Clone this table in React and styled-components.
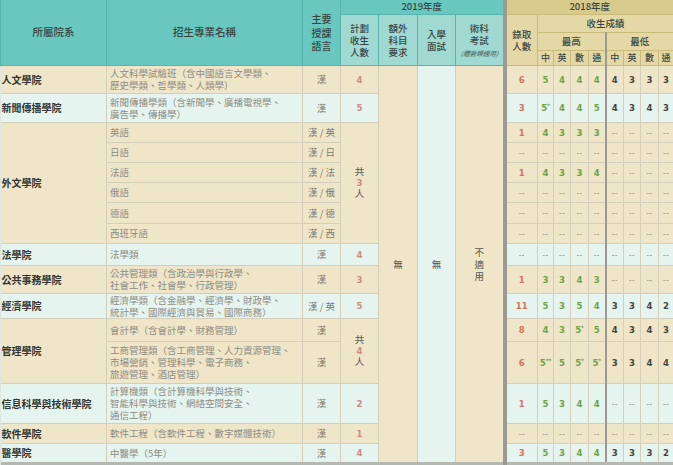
import React from "react";
import styled, { createGlobalStyle } from "styled-components";

const Global = createGlobalStyle`
  html, body { margin: 0; padding: 0; background: #dfe5df; }
  body { font-family: "Noto Sans CJK TC", "Noto Sans", sans-serif; }
`;

const BEIGE = "#efe5c8";
const MINT = "#e6f4ef";
const LINE = "#d3cfbb";
const TEAL = "#68c7bf";
const TEAL_LIGHT = "#9fd9d1";
const TEAL_LINE = "#58b5ad";
const KHAKI = "#d8ca8b";
const KHAKI_LIGHT = "#e4d9a6";
const KHAKI_LINE = "#c9bb7c";
const DIVIDER = "#9b9b93";

const Table = styled.table`
  width: 673px;
  table-layout: fixed;
  border-collapse: collapse;
  border-bottom: 3px solid #b5b8b0;
`;

const HeadRow = styled.tr`
  height: ${(p) => p.$h}px;
`;

const HeadCell = styled.th`
  padding: 0;
  background: ${(p) => p.$bg};
  border: 1px solid ${(p) => p.$line};
  border-left: ${(p) => (p.$div ? `${p.$div}px solid ${DIVIDER}` : `1px solid ${p.$line}`)};
  border-top: none;
  color: #3a4644;
  font-size: ${(p) => p.$size || 9.5}px;
  font-weight: 500;
  line-height: ${(p) => p.$lh || 12}px;
  text-align: center;
  vertical-align: middle;
  white-space: nowrap;
`;

const Note = styled.span`
  display: inline-block;
  font-size: 6.5px;
  font-style: italic;
  line-height: 8px;
  color: #56706c;
  transform: skewX(-8deg);
`;

const BodyRow = styled.tr`
  height: ${(p) => p.$h}px;
`;

const Cell = styled.td`
  padding: 0;
  background: ${(p) => (p.$mint ? MINT : BEIGE)};
  border: 1px solid ${LINE};
  vertical-align: middle;
  white-space: nowrap;
  overflow: hidden;
`;

const DeptCell = styled(Cell)`
  border-left: none;
  padding-left: 1px;
  font-size: 10px;
  font-weight: 700;
  color: #33352f;
`;

const ProgCell = styled(Cell)`
  padding-left: 3px;
  font-size: 9.5px;
  line-height: 12px;
  color: #8e8d84;
`;

const LangCell = styled(Cell)`
  text-align: center;
  font-size: 9.5px;
  color: #7c7b72;
`;

const PlanCell = styled(Cell)`
  text-align: center;
  font-family: "DejaVu Sans Condensed", "Liberation Sans Narrow", sans-serif;
  font-size: 9.5px;
  font-weight: 600;
  color: #cf8a80;
  line-height: 11px;
`;

const Gong = styled.span`
  font-family: "Noto Sans CJK TC", sans-serif;
  font-weight: 400;
  font-size: 9.5px;
  color: #55564f;
`;

const NoteCell = styled(Cell)`
  border-top: none;
  text-align: center;
  font-size: 9.5px;
  line-height: 12px;
  color: #55564f;
`;

const NumCell = styled(Cell)`
  text-align: center;
  font-family: "DejaVu Sans Condensed", "Liberation Sans Narrow", sans-serif;
  font-size: 9.5px;
  font-weight: 600;
  color: ${(p) => p.$color};
  border-left: ${(p) => (p.$div ? `${p.$div}px solid ${DIVIDER}` : `1px solid ${LINE}`)};
`;

const Sup = styled.span`
  font-size: 6px;
  vertical-align: 3px;
`;

const Dash = styled.span`
  color: #8e8d84;
  font-weight: 400;
  font-size: 8px;
  letter-spacing: 0.5px;
`;

const rows = [
  { h: 28, dept: "人文學院", span: 1, prog: ["人文科學試驗班（含中國語言文學類、", "歷史學類、哲學類、人類學）"], lang: "漢", plan: "4", mint: false, adm: "6", hi: ["5", "4", "4", "4"], lo: ["4", "3", "3", "3"] },
  { h: 29, dept: "新聞傳播學院", span: 1, prog: ["新聞傳播學類（含新聞學、廣播電視學、", "廣告學、傳播學）"], lang: "漢", plan: "5", mint: true, adm: "3", hi: ["5*", "4", "4", "5"], lo: ["4", "3", "4", "3"] },
  { h: 20, dept: "外文學院", span: 6, prog: ["英語"], lang: "漢 / 英", plan: "共3", planSpan: 6, mint: false, adm: "1", hi: ["4", "3", "3", "3"], lo: null },
  { h: 20, prog: ["日語"], lang: "漢 / 日", mint: false, adm: null },
  { h: 20, prog: ["法語"], lang: "漢 / 法", mint: false, adm: "1", hi: ["4", "3", "3", "4"], lo: null },
  { h: 20, prog: ["俄語"], lang: "漢 / 俄", mint: false, adm: null },
  { h: 21, prog: ["德語"], lang: "漢 / 德", mint: false, adm: null },
  { h: 20, prog: ["西班牙語"], lang: "漢 / 西", mint: false, adm: null },
  { h: 22, dept: "法學院", span: 1, prog: ["法學類"], lang: "漢", plan: "4", mint: true, adm: null },
  { h: 28, dept: "公共事務學院", span: 1, prog: ["公共管理類（含政治學與行政學、", "社會工作、社會學、行政管理）"], lang: "漢", plan: "3", mint: false, adm: "1", hi: ["3", "3", "4", "3"], lo: null },
  { h: 25, dept: "經濟學院", span: 1, prog: ["經濟學類（含金融學、經濟學、財政學、", "統計學、國際經濟與貿易、國際商務）"], lang: "漢 / 英", plan: "5", mint: true, adm: "11", hi: ["5", "3", "5", "4"], lo: ["3", "3", "4", "2"] },
  { h: 23, dept: "管理學院", span: 2, prog: ["會計學（含會計學、財務管理）"], lang: "漢", plan: "共4", planSpan: 2, mint: false, adm: "8", hi: ["4", "3", "5*", "5"], lo: ["4", "3", "4", "3"] },
  { h: 42, prog: ["工商管理類（含工商管理、人力資源管理、", "市場營銷、管理科學、電子商務、", "旅遊管理、酒店管理）"], lang: "漢", mint: false, adm: "6", hi: ["5**", "5", "5*", "5*"], lo: ["3", "3", "4", "4"] },
  { h: 40, dept: "信息科學與技術學院", span: 1, prog: ["計算機類（含計算機科學與技術、", "智能科學與技術、網絡空間安全、", "通信工程）"], lang: "漢", plan: "2", mint: true, adm: "1", hi: ["5", "3", "4", "4"], lo: null },
  { h: 20, dept: "軟件學院", span: 1, prog: ["軟件工程（含軟件工程、數字媒體技術）"], lang: "漢", plan: "1", mint: false, adm: null },
  { h: 20, dept: "醫學院", span: 1, prog: ["中醫學（5年）"], lang: "漢", plan: "4", mint: true, adm: "3", hi: ["5", "3", "4", "4"], lo: ["3", "3", "3", "2"] },
];

const Score = ({ v }) => {
  if (v == null) return <Dash>--</Dash>;
  const m = v.match(/^(\d+)(\**)$/);
  return (
    <>
      {m[1]}
      {m[2] && <Sup>{m[2]}</Sup>}
    </>
  );
};

const Stack = ({ lines }) => (
  <>
    {lines.map((l, i) => (
      <React.Fragment key={i}>
        {i > 0 && <br />}
        {l}
      </React.Fragment>
    ))}
  </>
);

const widths = [106, 196, 38, 38, 39, 38, 49, 33, 16, 17, 18, 17, 18, 17, 18, 15];

export default function App() {
  const total = rows.length;
  return (
    <>
      <Global />
      <Table>
        <colgroup>
          {widths.map((w, i) => (
            <col key={i} style={{ width: w }} />
          ))}
        </colgroup>
        <thead>
          <HeadRow $h={14}>
            <HeadCell rowSpan={4} $bg={TEAL} $line={TEAL_LINE} $size={10.5}>所屬院系</HeadCell>
            <HeadCell rowSpan={4} $bg={TEAL} $line={TEAL_LINE} $size={10.5}>招生專業名稱</HeadCell>
            <HeadCell rowSpan={4} $bg={TEAL} $line={TEAL_LINE} $size={10} $lh={13.5}>
              <Stack lines={["主要", "授課", "語言"]} />
            </HeadCell>
            <HeadCell colSpan={4} $bg={TEAL} $line={TEAL_LINE} $size={9.5} $lh={13}>2019年度</HeadCell>
            <HeadCell colSpan={9} $bg={KHAKI} $line={KHAKI_LINE} $div={4} $size={9.5} $lh={13}>2018年度</HeadCell>
          </HeadRow>
          <HeadRow $h={18}>
            <HeadCell rowSpan={3} $bg={TEAL_LIGHT} $line={TEAL_LINE}>
              <Stack lines={["計劃", "收生", "人數"]} />
            </HeadCell>
            <HeadCell rowSpan={3} $bg={TEAL_LIGHT} $line={TEAL_LINE}>
              <Stack lines={["額外", "科目", "要求"]} />
            </HeadCell>
            <HeadCell rowSpan={3} $bg={TEAL_LIGHT} $line={TEAL_LINE}>
              <Stack lines={["入學", "面試"]} />
            </HeadCell>
            <HeadCell rowSpan={3} $bg={TEAL_LIGHT} $line={TEAL_LINE}>
              術科
              <br />
              考試
              <br />
              <Note>(體藝類適用)</Note>
            </HeadCell>
            <HeadCell rowSpan={3} $bg={KHAKI_LIGHT} $line={KHAKI_LINE} $div={4}>
              <Stack lines={["錄取", "人數"]} />
            </HeadCell>
            <HeadCell colSpan={8} $bg={KHAKI_LIGHT} $line={KHAKI_LINE}>收生成績</HeadCell>
          </HeadRow>
          <HeadRow $h={18}>
            <HeadCell colSpan={4} $bg={KHAKI_LIGHT} $line={KHAKI_LINE}>最高</HeadCell>
            <HeadCell colSpan={4} $bg={KHAKI_LIGHT} $line={KHAKI_LINE} $div={2}>最低</HeadCell>
          </HeadRow>
          <HeadRow $h={15}>
            {["中", "英", "數", "通", "中", "英", "數", "通"].map((c, i) => (
              <HeadCell key={i} $bg={KHAKI_LIGHT} $line={KHAKI_LINE} $div={i === 4 ? 2 : 0} $size={9}>
                {c}
              </HeadCell>
            ))}
          </HeadRow>
        </thead>
        <tbody>
          {rows.map((r, i) => (
            <BodyRow key={i} $h={r.h}>
              {r.dept && (
                <DeptCell rowSpan={r.span} $mint={r.mint}>
                  {r.dept}
                </DeptCell>
              )}
              <ProgCell $mint={r.mint}>
                <Stack lines={r.prog} />
              </ProgCell>
              <LangCell $mint={r.mint}>{r.lang}</LangCell>
              {r.plan && (
                <PlanCell rowSpan={r.planSpan || 1} $mint={r.mint}>
                  {r.plan.startsWith("共") ? (
                    <>
                      <Gong>共</Gong>
                      <br />
                      {r.plan.slice(1)}
                      <br />
                      <Gong>人</Gong>
                    </>
                  ) : (
                    r.plan
                  )}
                </PlanCell>
              )}
              {i === 0 && (
                <>
                  <NoteCell rowSpan={total}>無</NoteCell>
                  <NoteCell rowSpan={total} $mint>無</NoteCell>
                  <NoteCell rowSpan={total}>
                    <Stack lines={["不", "適", "用"]} />
                  </NoteCell>
                </>
              )}
              <NumCell $mint={r.mint} $div={4} $color="#d4735f">
                <Score v={r.adm} />
              </NumCell>
              {[0, 1, 2, 3].map((k) => (
                <NumCell key={"h" + k} $mint={r.mint} $color="#6ea347">
                  <Score v={r.adm ? r.hi[k] : null} />
                </NumCell>
              ))}
              {[0, 1, 2, 3].map((k) => (
                <NumCell key={"l" + k} $mint={r.mint} $div={k === 0 ? 2 : 0} $color="#45463f">
                  <Score v={r.lo ? r.lo[k] : null} />
                </NumCell>
              ))}
            </BodyRow>
          ))}
        </tbody>
      </Table>
    </>
  );
}
